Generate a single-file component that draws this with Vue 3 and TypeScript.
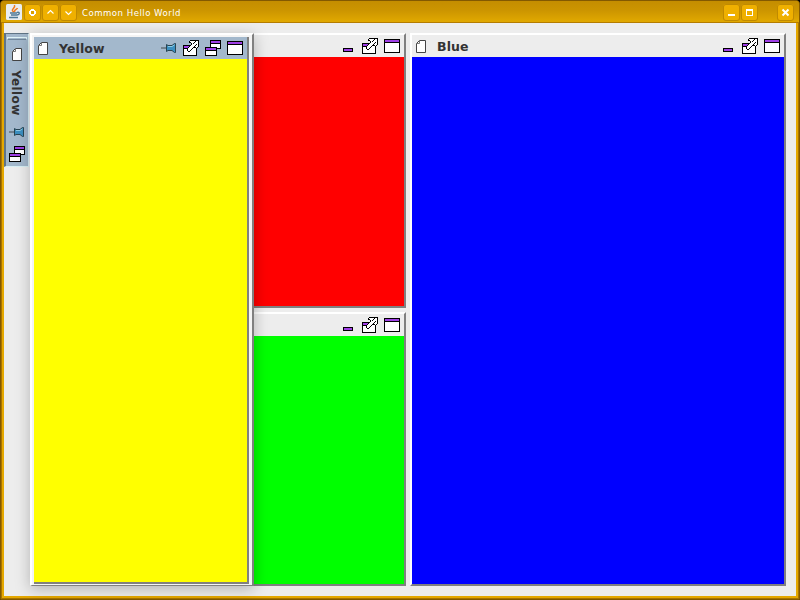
<script setup lang="ts">
import { defineComponent, h } from 'vue'

type Rect = [number, number, number, number, string]
const K = '#000000'
const W = '#ffffff'
const P = '#a040e6'

const arrowRows = [
  '.......KKKKKKKKK',
  '......KWWWWWKWWK',
  '......KKWWWKWWWK',
  '........KWKWWWWK',
  '........KWWWWKWK',
  '.......KWWWWKWWK',
  '......KWWWWKWWWK',
  '.....KWWWWKKKWK.',
  '....KWWWWKWWWK..',
  '....KWWWKWWW....',
  '....KWWKWWWW....',
  '.....KKWWWWW....',
]
const arrow: Rect[] = arrowRows.flatMap((row, y) =>
  [...row].flatMap((c, x): Rect[] => (c === '.' ? [] : [[x, y, 1, 1, c === 'K' ? K : W]])),
)
const shapes: Record<string, Rect[]> = {
  min: [[3, 10, 10, 4, K], [4, 11, 8, 2, P]],
  ext: [[0, 5, 14, 11, K], [1, 6, 12, 2, P], [1, 9, 12, 6, W], ...arrow],
  max: [[0, 1, 16, 14, K], [1, 2, 14, 2, P], [1, 5, 14, 9, W]],
  dock: [
    [5, 0, 11, 9, K], [6, 1, 9, 2, P], [6, 4, 9, 4, W],
    [0, 7, 12, 9, K], [1, 8, 10, 2, P], [1, 11, 10, 4, W],
  ],
}

const Glyph = defineComponent({
  props: { kind: { type: String, required: true } },
  setup(props) {
    return () =>
      h(
        'svg',
        { width: 16, height: 16, viewBox: '0 0 16 16', 'shape-rendering': 'crispEdges' },
        shapes[props.kind].map(([x, y, width, height, fill]) => h('rect', { x, y, width, height, fill })),
      )
  },
})

const Page = () =>
  h('svg', { width: 11, height: 13, viewBox: '0 0 11 13' }, [
    h('path', { d: 'M3.5.5h6v12h-9v-9z', fill: '#fff', stroke: '#444' }),
    h('path', { d: 'M3.5.5v3h-3', fill: 'none', stroke: '#777' }),
  ])

const Pin = () =>
  h('svg', { width: 16, height: 10, viewBox: '0 0 16 10' }, [
    h('path', { d: 'M0 5h6', stroke: '#59636b', 'stroke-width': 1.3 }),
    h('path', { d: 'M5.500 1.500l1.5 1h4L13.500.5h1v9h-1l-2.500-2H7l-1.500 1z', fill: '#3b8fc0', stroke: '#294552' }),
    h('path', { d: 'M7 3.500h4L13.500 2', stroke: '#8ccbe4', fill: 'none' }),
  ])

const actions = ['min', 'ext', 'max']
</script>

<template>
  <div class="window">
    <header class="titlebar">
      <svg class="java" width="16" height="16" viewBox="0 0 16 16">
        <rect width="16" height="16" rx="1.5" fill="#e9eef2" />
        <path d="M8 8C3.500 5.500 10 4.500 8.500 1M9 8c-1.500-2 2-2.500 2.500-4" fill="none" stroke="#ef7a20" stroke-width="1.5" />
        <path d="M4 9h7M5 11h6M3 13.500h9M11 8.500c3-1 3 2 0 2.500" fill="none" stroke="#4d7896" stroke-width="1.4" />
      </svg>
      <span class="btn"><svg width="17" height="17"><path d="M7 5h3v1h1v1h1v3h-1v1h-1v1H7v-1H6v-1H5V7h1V6h1z" fill="#fff" /><rect x="7" y="7" width="3" height="3" fill="#dca200" /></svg></span>
      <span class="btn"><svg width="17" height="17"><path d="M5.500 9.500l3-3 3 3" class="thin" /></svg></span>
      <span class="btn"><svg width="17" height="17"><path d="M5.500 7.500l3 3 3-3" class="thin" /></svg></span>
      <span class="caption">Common Hello World</span>
      <span class="btn"><svg width="17" height="17"><rect x="5" y="10" width="7" height="2" fill="#fff" /></svg></span>
      <span class="btn"><svg width="17" height="17"><path d="M5 5h7v7H5zM6 7v4h5V7z" fill="#fff" fill-rule="evenodd" /></svg></span>
      <span class="btn close"><svg width="17" height="17"><path d="M5.500 5.500l6 6M11.500 5.500l-6 6" stroke="#fff" stroke-width="2" /></svg></span>
    </header>

    <main class="content">
      <aside class="tab">
        <i class="grip"></i>
        <Page />
        <span class="tab-name">Yellow</span>
        <Pin class="tab-pin" />
        <Glyph kind="dock" />
      </aside>
      <div class="column">
        <section class="panel upper">
          <div class="bar"><Glyph v-for="a in actions" :key="a" :kind="a" /></div>
          <div class="fill red"></div>
        </section>
        <section class="panel lower">
          <div class="bar"><Glyph v-for="a in actions" :key="a" :kind="a" /></div>
          <div class="fill green"></div>
        </section>
      </div>
      <section class="panel wide">
        <div class="bar">
          <Page /><span class="name">Blue</span>
          <Glyph v-for="a in actions" :key="a" :kind="a" />
        </div>
        <div class="fill blue"></div>
      </section>

      <section class="flyout">
        <div class="inner">
          <div class="bar">
            <Page /><span class="name">Yellow</span>
            <Pin /><Glyph kind="ext" /><Glyph kind="dock" /><Glyph kind="max" />
          </div>
          <div class="fill yellow"></div>
        </div>
      </section>
    </main>
  </div>
</template>

<style>
body { margin: 0; background: #000; overflow: hidden; }
</style>

<style scoped>
.window {
  box-sizing: border-box;
  width: 800px;
  height: 600px;
  display: flex;
  flex-direction: column;
  border: 1px solid #835900;
  border-radius: 4px 4px 0 0;
  background: #e5a800;
  padding: 0 3px 3px;
  box-shadow: inset -1px -1px #a87400, inset 1px 0 #a87400;
  font-family: "DejaVu Sans", sans-serif;
}
svg { display: block; flex: none; }
.titlebar {
  box-sizing: border-box;
  height: 22px;
  margin: 0 -3px;
  padding: 3px 5px 0 5px;
  display: flex;
  align-items: flex-start;
  gap: 1px;
  border-radius: 3px 3px 0 0;
  border-bottom: 1px solid #b47c00;
  background: linear-gradient(#c48d00, #cc9500 45%, #e1a900);
}
.java { margin-right: 1px; }
.btn {
  flex: none;
  box-sizing: border-box;
  width: 17px;
  height: 17px;
  border-radius: 3px;
  background: #efb000;
  box-shadow: inset 0 0 0 1px #c08a00;
}
.thin { fill: none; stroke: #fff; stroke-width: 1.1; }
.caption {
  flex: 1;
  padding-left: 4px;
  font: 9.5px/18px "DejaVu Sans Condensed", "DejaVu Sans", sans-serif;
  font-stretch: condensed;
  letter-spacing: 0.5px;
  color: #fff;
  white-space: nowrap;
}
.close { margin-left: 18px; }
.content {
  position: relative;
  flex: 1;
  display: flex;
  align-items: flex-start;
  padding: 10px 10px 0 0;
  background: #ededed;
}
.tab {
  box-sizing: border-box;
  width: 25px;
  height: 134px;
  display: flex;
  flex-direction: column;
  align-items: center;
  border: 1px solid #607486;
  border-left-width: 2px;
  border-right-color: #d8f0f5;
  border-bottom-color: #d8f0f5;
  background: #a3b8cc;
}
.grip {
  box-sizing: border-box;
  width: 20px;
  height: 3px;
  margin: 3px 0 8px;
  border: 1px solid #e0f4f8;
  border-bottom-color: #71879b;
}
.tab-name {
  height: 47px;
  margin-top: 9px;
  margin-right: 2px;
  writing-mode: vertical-rl;
  font: bold 12px/16px "DejaVu Sans", sans-serif;
  letter-spacing: 0.4px;
  color: #333;
}
.tab-pin { margin: 10px 0 9px; }
.column { width: 376px; margin-left: 1px; display: flex; flex-direction: column; gap: 4px; }
.panel {
  box-sizing: border-box;
  display: flex;
  flex-direction: column;
  border: 2px solid #fff;
  border-right-color: #808080;
  border-bottom-color: #808080;
  background: #ededed;
}
.upper { height: 275px; }
.lower { height: 274px; }
.wide { width: 376px; height: 553px; margin-left: 4px; }
.bar {
  box-sizing: border-box;
  height: 22px;
  flex: none;
  display: flex;
  align-items: center;
  justify-content: flex-end;
  gap: 6px;
  padding: 0 4px;
}
.name {
  flex: 1;
  margin-left: 4px;
  padding-top: 2px;
  font: bold 12.5px/20px "DejaVu Sans", sans-serif;
  letter-spacing: 0.1px;
  color: #333;
}
.fill { flex: 1; }
.red { background: #f00; }
.green { background: #0f0; }
.blue { background: #00f; }
.yellow { background: #ff0; }
.flyout {
  position: absolute;
  left: 26px;
  top: 10px;
  box-sizing: border-box;
  width: 224px;
  height: 553px;
  padding: 2px 3px 0 2px;
  border: 2px solid #fff;
  border-right: 2px solid #808080;
  border-bottom: 1px solid #808080;
  background: #f4f4f4;
  box-shadow: 0 3px 14px rgba(0, 0, 0, 0.25);
}
.inner {
  box-sizing: border-box;
  height: 547px;
  display: flex;
  flex-direction: column;
  border-right: 2px solid #808080;
  border-bottom: 2px solid #808080;
}
.inner .bar { background: #a3b8cc; }
</style>
